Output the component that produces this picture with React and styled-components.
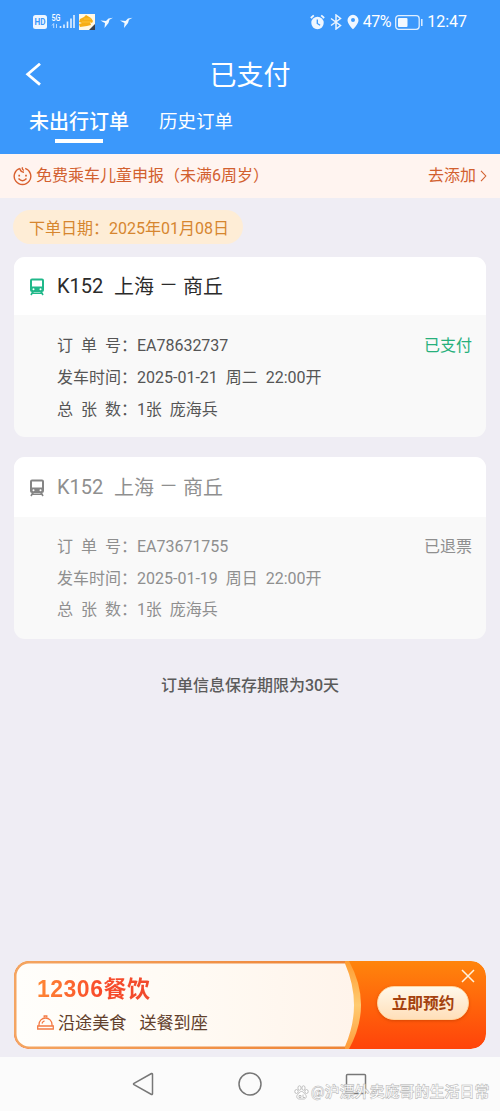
import styled, { createGlobalStyle } from "styled-components";

const GlobalStyle = createGlobalStyle`
  * {
    box-sizing: border-box;
  }

  body {
    margin: 0;
    font-family: Roboto, "Noto Sans CJK SC", sans-serif;
    background-color: #efedf4;
  }

  p,
  h1,
  h2 {
    margin: 0;
    font-weight: 400;
  }

  svg {
    display: block;
    flex-shrink: 0;
  }
`;

const Page = styled.div`
  width: 500px;
  height: 1111px;
  display: flex;
  flex-direction: column;
  overflow: hidden;
  background-color: #efedf4;
`;

const Header = styled.header`
  height: 154px;
  color: #ffffff;
  background-color: #3b98fb;
`;

const StatusBar = styled.div`
  height: 44px;
  padding: 0 33px 0 32px;
  display: flex;
  align-items: center;
  justify-content: space-between;
  font-size: 16px;
  line-height: 20px;
`;

const StatusGroup = styled.div`
  display: flex;
  align-items: center;
  gap: ${({ $gap }) => $gap || 0}px;
`;

const StatusText = styled.span`
  letter-spacing: ${({ $spacing }) => $spacing || 0}px;
`;

const TitleBar = styled.div`
  height: 62px;
  padding: 0 25px;
  display: grid;
  grid-template-columns: 20px 1fr 20px;
  align-items: center;

  h1 {
    padding-top: 2px;
    font-size: 27px;
    line-height: 40px;
    text-align: center;
  }
`;

const Tabs = styled.nav`
  height: 48px;
  padding: 1px 0 0 29px;
  display: flex;
  gap: 30px;
`;

const Tab = styled.div`
  display: flex;
  flex-direction: column;
  align-items: center;
  font-size: ${({ $active }) => ($active ? 20 : 18.5)}px;
  font-weight: ${({ $active }) => ($active ? 500 : 400)};
  line-height: ${({ $active }) => ($active ? 30 : 31)}px;

  &::after {
    content: "";
    width: 48px;
    height: 4px;
    margin-top: 2px;
    background-color: ${({ $active }) => ($active ? "#ffffff" : "transparent")};
  }
`;

const Notice = styled.div`
  height: 44px;
  padding: 0 13px 0 13px;
  display: flex;
  align-items: center;
  font-size: 16px;
  line-height: 24px;
  color: #d2602f;
  background-color: #fff4f0;

  p {
    flex: 1;
    margin-left: 4px;
  }

  span {
    margin-right: 4px;
  }
`;

const Content = styled.main`
  flex: 1;
  padding: 12px 14px 8px;
  display: flex;
  flex-direction: column;
`;

const DatePill = styled.p`
  align-self: flex-start;
  height: 34px;
  margin-left: -1px;
  padding: 1px 14px 0 16px;
  font-size: 16px;
  line-height: 35px;
  color: #d6862f;
  background-color: #feedd6;
  border-radius: 17px;
`;

const Card = styled.section`
  height: ${({ $height }) => $height}px;
  margin-top: ${({ $gap }) => $gap}px;
  flex-shrink: 0;
  color: ${({ $muted }) => ($muted ? "#8f8f8f" : "#555555")};
  background-color: #f9f9f9;
  border-radius: 11px;
  overflow: hidden;
`;

const CardHead = styled.div`
  height: ${({ $height }) => $height}px;
  padding: 2px 0 0 15px;
  display: flex;
  align-items: center;
  color: ${({ $muted }) => ($muted ? "#8f8f8f" : "#2b2b2b")};
  background-color: #ffffff;

  h2 {
    display: flex;
    margin-left: 12px;
    font-size: 20px;
    line-height: 34px;
  }
`;

const TrainNo = styled.span`
  width: 57px;
  line-height: 33px;
`;

const Dash = styled.span`
  width: 29px;
  font-size: 15px;
  line-height: 30px;
  text-align: center;
`;

const Details = styled.div`
  padding: ${({ $top }) => $top}px 14px 0 43px;
`;

const Row = styled.div`
  height: ${({ $height }) => $height || 32}px;
  display: flex;
  justify-content: space-between;
  font-size: 16px;
  line-height: 24px;
  white-space: pre;
`;

const Status = styled.span`
  color: ${({ $muted }) => ($muted ? "#8f8f8f" : "#27b07c")};
`;

const Tip = styled.p`
  margin-top: 35px;
  font-size: 16px;
  font-weight: 500;
  line-height: 24px;
  text-align: center;
  color: #5b5b5b;
`;

const Banner = styled.aside`
  position: relative;
  height: 88px;
  margin-top: auto;
  display: flex;
  justify-content: space-between;
  border-radius: 15px;
  overflow: hidden;
`;

const BannerArt = styled.svg`
  position: absolute;
  inset: 0;
`;

const BannerCopy = styled.div`
  position: relative;
  padding: 11px 0 0 23px;

  h2 {
    width: max-content;
    font-family: "Liberation Sans", "Noto Sans CJK SC", sans-serif;
    font-size: 23px;
    font-weight: 700;
    line-height: 34px;
    letter-spacing: 0.5px;
    color: transparent;
    background: linear-gradient(100deg, #ff8a35, #f94b2b 55%, #f04a2c);
    background-clip: text;
  }
`;

const BannerLine = styled.div`
  display: flex;
  align-items: center;
  margin-top: 4px;
  gap: 4px;
  font-size: 17.1px;
  line-height: 26px;
  color: #62402c;

  span + span {
    margin-left: 9px;
  }
`;

const BannerSide = styled.div`
  position: relative;
  width: 126px;
  padding: 8px 11px 0 0;
  display: flex;
  flex-direction: column;
  align-items: flex-end;
`;

const BookButton = styled.button`
  width: 92px;
  height: 34px;
  margin: 3px 6px 0 0;
  padding: 0 0 1px;
  border: 1px solid #ffd49d;
  border-radius: 17px;
  font-family: "Noto Sans CJK SC", sans-serif;
  font-size: 15.7px;
  font-weight: 700;
  color: #a4410e;
  background: linear-gradient(#fff8ea, #ffdfba);
  box-shadow: 0 1px 3px rgba(190, 60, 0, 0.6);
`;

const NavBar = styled.footer`
  position: relative;
  height: 54px;
  padding: 0 133px 0 131px;
  display: flex;
  align-items: center;
  justify-content: space-between;
  background-color: #fbfbfb;
`;

const Watermark = styled.div`
  position: absolute;
  left: 294px;
  top: 24px;
  display: flex;
  align-items: center;
  gap: 2px;
  font-size: 15px;
  font-weight: 700;
  line-height: 22px;
  white-space: nowrap;
  color: rgba(255, 255, 255, 0.9);
  -webkit-text-stroke: 0.5px #b0b0b0;

  span {
    letter-spacing: 0;
  }
`;

const SignalIcons = () => (
  <svg width="102" height="20" viewBox="0 0 102 20">
    <rect x="1" y="3" width="14" height="14" rx="2.5" fill="#eef6ff" />
    <text
      x="2.5"
      y="13.300"
      fontSize="9"
      fontWeight="700"
      fill="#3b98fb"
      textLength="11"
      lengthAdjust="spacingAndGlyphs"
    >
      HD
    </text>
    <text
      x="19.500"
      y="9.300"
      fontSize="9.500"
      fontWeight="500"
      fill="#ffffff"
      textLength="9"
      lengthAdjust="spacingAndGlyphs"
    >
      5G
    </text>
    <path d="M20 13.500l1.700-2V16M24.500 12v4" fill="none" stroke="#b9dbff" />
    <path
      d="M28.500 14v2M32 12.500v3.500M35.500 9.500v6.500M39 6.500v9.500M42 3v13"
      stroke="#e4f1ff"
      strokeWidth="1.600"
    />
    <rect x="47" y="2" width="16" height="16" fill="#fff8e5" />
    <path d="M48 7l4-2 2-2 5 3 2 3-1 2-2-1 1 3-4 1-7 1-1-3 3-1-3-1z" fill="#f6ae16" />
    <path d="M52 7h7M50 10h9" stroke="#ffc93f" strokeWidth=".8" />
    <path d="M63 12v6h-6z" fill="#38404f" />
    <path
      id="swallow"
      d="M68.500 8.500l5.500.5 2.500-2.500 4.500-.8-3.500 2-1 3.300-4 5 .5-5-2-1z"
      fill="#f4faff"
    />
    <use href="#swallow" x="19.500" />
  </svg>
);

const AlarmIcon = () => (
  <svg width="15" height="16" viewBox="0 0 15 16">
    <circle cx="7.500" cy="9" r="6.200" fill="#f0f7ff" />
    <path d="M.8 4l3-2.700M14.200 4l-3-2.700" stroke="#f0f7ff" strokeWidth="1.700" />
    <path d="M7.300 5.500v4l2.800 1.800" fill="none" stroke="#3b98fb" strokeWidth="1.300" />
  </svg>
);

const BluetoothIcon = () => (
  <svg width="12" height="16" viewBox="0 0 12 16">
    <path
      d="M1 4.500l9.500 7L6 15V1l4.500 3.500L1 11.500"
      fill="none"
      stroke="#eaf4ff"
      strokeWidth="1.500"
    />
  </svg>
);

const PinIcon = () => (
  <svg width="12" height="16" viewBox="0 0 12 16">
    <path
      d="M6 .8a5.500 5.500 0 0 0-5.500 5.400C.5 10 6 15.300 6 15.300S11.500 10 11.500 6.200A5.500 5.500 0 0 0 6 .8zM6 4a2 2 0 1 1 0 4 2 2 0 0 1 0-4z"
      fill="#f0f7ff"
    />
  </svg>
);

const BatteryIcon = () => (
  <svg width="28" height="15" viewBox="0 0 28 15">
    <rect x=".7" y=".7" width="23.500" height="13.600" rx="3" fill="none" stroke="#e0efff" strokeWidth="1.300" />
    <rect x="3" y="3" width="9.500" height="9" rx="1" fill="#f2f8ff" />
    <path d="M26.800 4v7" stroke="#e0efff" strokeWidth="1.500" />
  </svg>
);

const BackIcon = () => (
  <svg width="20" height="24" viewBox="0 0 20 24">
    <path d="M15 .8L2.700 11.200 15 21.600" fill="none" stroke="#ffffff" strokeWidth="2.800" />
  </svg>
);

const ChildIcon = () => (
  <svg width="19" height="20" viewBox="0 0 19 20" fill="none" stroke="#d9602f" strokeWidth="1.400">
    <path d="M6.800 2.400A8.300 8.300 0 1 0 12.200 2.400M6.800 2.400Q7.300 6 11 6.200" />
    <path d="M9.500 1.200Q8.800 3.700 11 4.200M5.500 12.500Q9.500 17 13.500 12.500" />
    <path d="M6.200 8.800v1.800M13 8.800v1.800" strokeWidth="1.700" />
  </svg>
);

const TrainIcon = ({ color }) => (
  <svg width="16" height="18" viewBox="0 0 16 18">
    <path
      fillRule="evenodd"
      d="M3 .5h10a2 2 0 0 1 2 2v9.500a2 2 0 0 1-2 2H3a2 2 0 0 1-2-2V2.500a2 2 0 0 1 2-2zM3 2.500v6h10v-6zM4.500 10.200a1 1 0 1 0 0 2 1 1 0 0 0 0-2zM11.500 10.200a1 1 0 1 0 0 2 1 1 0 0 0 0-2z"
      fill={color}
    />
    <path d="M4.300 13L2 17M11.700 13L14 17M4 15.300h8" stroke={color} strokeWidth="1.600" />
  </svg>
);

const ClocheIcon = () => (
  <svg width="17" height="16" viewBox="0 0 17 16" fill="none" stroke="#f47b45" strokeWidth="1.300">
    <path d="M2 11V9.500a6.500 6.500 0 0 1 13 0V11M.7 14V11h15.600v3z" />
    <path d="M7.200 2.500V1h2.600v1.500M5 8.500Q5.400 6.500 7.500 5.800" />
  </svg>
);

const PawIcon = () => (
  <svg width="15" height="15" viewBox="0 0 15 15" fill="#ffffff" stroke="#b0b0b0" strokeWidth=".8">
    <ellipse cx="2.500" cy="6.500" rx="1.700" ry="2" />
    <ellipse cx="5.500" cy="3" rx="1.600" ry="2.200" />
    <ellipse cx="9.500" cy="3" rx="1.600" ry="2.200" />
    <ellipse cx="12.500" cy="6.500" rx="1.700" ry="2" />
    <path d="M7.500 6.500c-2 0-2.500 2-4 3.300-1.500 1.500-.6 4.200 1.700 4.200h4.600c2.300 0 3.200-2.700 1.700-4.200-1.500-1.300-2-3.300-4-3.300z" />
    <path d="M5 10.500h2v2H5zM9 9.500v3h2" fill="none" />
  </svg>
);

const orders = [
  {
    number: "EA78632737",
    time: "2025-01-21  周二  22:00开",
    status: "已支付",
    muted: false,
    gap: 13,
    height: 180,
    headHeight: 58,
    top: 18.5,
    rowHeight: 32,
  },
  {
    number: "EA73671755",
    time: "2025-01-19  周日  22:00开",
    status: "已退票",
    muted: true,
    gap: 20,
    height: 182,
    headHeight: 60,
    top: 18,
    rowHeight: 31,
  },
];

const OrderCard = ({ order }) => {
  const { muted } = order;
  return (
    <Card $height={order.height} $gap={order.gap} $muted={muted}>
      <CardHead $height={order.headHeight} $muted={muted}>
        <TrainIcon color={muted ? "#858585" : "#20b88a"} />
        <h2>
          <TrainNo>K152</TrainNo>
          <span>上海</span>
          <Dash>一</Dash>
          <span>商丘</span>
        </h2>
      </CardHead>
      <Details $top={order.top}>
        <Row>
          <span>{`订  单  号：${order.number}`}</span>
          <Status $muted={muted}>{order.status}</Status>
        </Row>
        <Row $height={order.rowHeight}>{`发车时间：${order.time}`}</Row>
        <Row>{"总  张  数：1张  庞海兵"}</Row>
      </Details>
    </Card>
  );
};

const FoodBanner = () => (
  <Banner>
    <BannerArt width="472" height="88" viewBox="0 0 472 88">
      <defs>
        <linearGradient id="side" x1="0" y1="0" x2="0" y2="1">
          <stop offset="0" stopColor="#ff850c" />
          <stop offset="1" stopColor="#ff430a" />
        </linearGradient>
        <linearGradient id="edge">
          <stop offset="0" stopColor="#f4a562" />
          <stop offset="1" stopColor="#ee8435" />
        </linearGradient>
        <linearGradient id="paper">
          <stop offset="0" stopColor="#fffefb" />
          <stop offset=".55" stopColor="#fffaf3" />
          <stop offset="1" stopColor="#fff4eb" />
        </linearGradient>
        <linearGradient id="curve" x1="0" y1="0" x2="0" y2="1">
          <stop offset="0" stopColor="#ff9c31" />
          <stop offset=".5" stopColor="#ffcb71" />
          <stop offset="1" stopColor="#ff9b3a" />
        </linearGradient>
      </defs>
      <rect width="472" height="88" rx="15" fill="url(#side)" />
      <path d="M15 0H333V88H15A15 15 0 0 1 0 73V15A15 15 0 0 1 15 0z" fill="url(#edge)" />
      <path d="M331 0H335Q359 44 335 88H331z" fill="url(#curve)" />
      <path
        d="M15 2.500H331Q349 44 331 85.500H15A12.500 12.500 0 0 1 2.500 73V15A12.500 12.500 0 0 1 15 2.500z"
        fill="url(#paper)"
      />
    </BannerArt>
    <BannerCopy>
      <h2>12306餐饮</h2>
      <BannerLine>
        <ClocheIcon />
        <span>沿途美食</span>
        <span>送餐到座</span>
      </BannerLine>
    </BannerCopy>
    <BannerSide>
      <svg width="14" height="14" viewBox="0 0 14 14">
        <path d="M1 1l12 12M13 1L1 13" stroke="#fff3dc" strokeWidth="1.500" />
      </svg>
      <BookButton>立即预约</BookButton>
    </BannerSide>
  </Banner>
);

const App = () => {
  return (
    <>
      <GlobalStyle />
      <Page>
        <Header>
          <StatusBar>
            <SignalIcons />
            <StatusGroup $gap={4}>
              <StatusGroup $gap={5}>
                <AlarmIcon />
                <BluetoothIcon />
                <PinIcon />
              </StatusGroup>
              <StatusText $spacing={-0.4}>47%</StatusText>
              <BatteryIcon />
              <StatusText>12:47</StatusText>
            </StatusGroup>
          </StatusBar>
          <TitleBar>
            <BackIcon />
            <h1>已支付</h1>
          </TitleBar>
          <Tabs>
            <Tab $active>未出行订单</Tab>
            <Tab>历史订单</Tab>
          </Tabs>
        </Header>
        <Notice>
          <ChildIcon />
          <p>免费乘车儿童申报（未满6周岁）</p>
          <span>去添加</span>
          <svg width="7" height="12" viewBox="0 0 7 12">
            <path d="M1 .8L5.800 6 1 11.200" fill="none" stroke="#d2602f" strokeWidth="1.100" />
          </svg>
        </Notice>
        <Content>
          <DatePill>下单日期：2025年01月08日</DatePill>
          {orders.map((order) => (
            <OrderCard key={order.number} order={order} />
          ))}
          <Tip>订单信息保存期限为30天</Tip>
          <FoodBanner />
        </Content>
        <NavBar>
          <svg width="24" height="26" viewBox="0 0 24 26">
            <path
              d="M20.500 2.500L3 12.300q-1 .7 0 1.400l17.500 9.800q1 .3 1-.7V3.200q0-1-1-.7z"
              fill="none"
              stroke="#777777"
              strokeWidth="1.500"
            />
          </svg>
          <svg width="24" height="24" viewBox="0 0 24 24">
            <circle cx="12" cy="12" r="11" fill="none" stroke="#777777" strokeWidth="1.500" />
          </svg>
          <svg width="22" height="22" viewBox="0 0 22 22">
            <rect x="1.500" y="1.500" width="19" height="19" rx="1" fill="none" stroke="#777777" strokeWidth="1.500" />
          </svg>
          <Watermark>
            <PawIcon />
            <span>@沪漂外卖庞哥的生活日常</span>
          </Watermark>
        </NavBar>
      </Page>
    </>
  );
};

export default App;
